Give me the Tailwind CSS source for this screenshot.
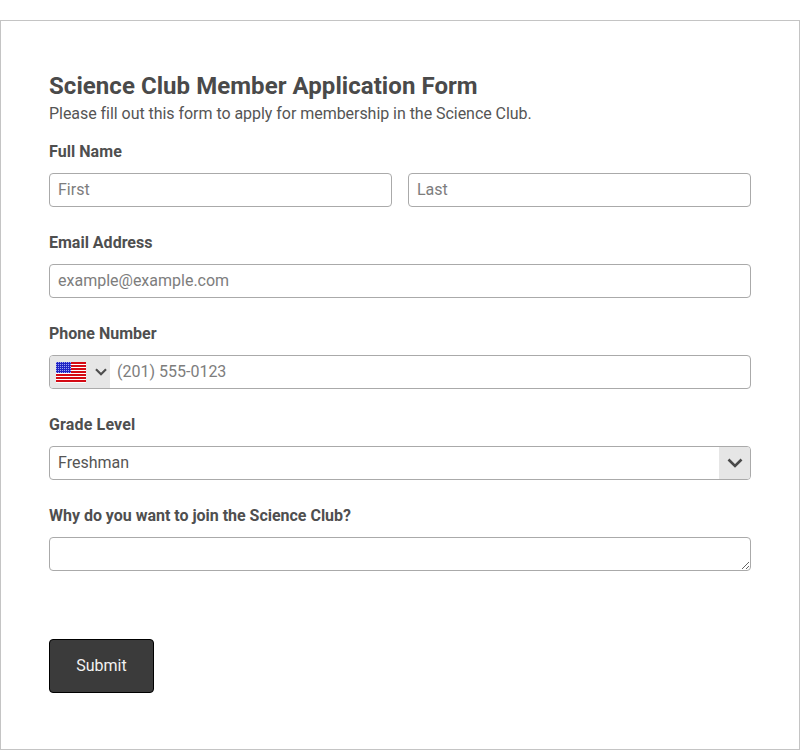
<!DOCTYPE html>
<html lang="en">
<head>
<meta charset="utf-8">
<title>Science Club Member Application Form</title>
<script src="https://cdn.jsdelivr.net/npm/@tailwindcss/browser@4"></script>
</head>
<body class="bg-white font-['Roboto',sans-serif] text-[#4f4f4f]">
<div class="pt-5 h-[750px] overflow-hidden">
<form class="h-[730px] border border-[#c4c4c4] px-12 pt-[49px]">
  <h1 class="text-2xl leading-[32px] font-bold tracking-[0.055px] text-[#4a4a4a]">Science Club Member Application Form</h1>
  <p class="text-base leading-[24px] tracking-[-0.042px] text-[#555555]">Please fill out this form to apply for membership in the Science Club.</p>

  <div class="mt-[15px] h-[91px]">
    <label class="block text-base leading-[22px] font-bold mb-[10px] tracking-[0.05px]">Full Name</label>
    <div class="flex gap-4">
      <input placeholder="First" class="w-full min-w-0 h-[34px] px-2 pb-[2px] text-base border border-[#aaaaaa] rounded-[4px] placeholder:text-[#7d7d7d] outline-none">
      <input placeholder="Last" class="w-full min-w-0 h-[34px] px-2 pb-[2px] text-base border border-[#aaaaaa] rounded-[4px] placeholder:text-[#7d7d7d] outline-none">
    </div>
  </div>

  <div class="h-[91px]">
    <label class="block text-base leading-[22px] font-bold mb-[10px]">Email Address</label>
    <input placeholder="example@example.com" class="block w-full h-[34px] px-2 pb-[2px] text-base border border-[#aaaaaa] rounded-[4px] placeholder:text-[#7d7d7d] outline-none">
  </div>

  <div class="h-[91px]">
    <label class="block text-base leading-[22px] font-bold mb-[10px]">Phone Number</label>
    <div class="flex h-[34px] border border-[#aaaaaa] rounded-[4px] overflow-hidden">
      <div class="flex items-center w-[60px] shrink-0 bg-[#e6e6e6] pl-[6px]">
        <svg width="30" height="21" viewBox="0 0 30 21" class="shrink-0">
          <defs>
            <pattern id="stars" width="2" height="2" patternUnits="userSpaceOnUse">
              <rect width="2" height="2" fill="#2024c4"/>
              <rect width="1" height="1" fill="#9ea2f0"/>
            </pattern>
          </defs>
          <rect width="30" height="21" fill="#fff"/>
          <g fill="#d40a14">
            <rect y="0" width="30" height="2"/><rect y="3" width="30" height="2"/><rect y="6" width="30" height="2"/><rect y="9" width="30" height="2"/><rect y="12" width="30" height="2"/><rect y="15" width="30" height="2"/><rect y="18" width="30" height="2"/>
          </g>
          <rect width="15" height="11" fill="url(#stars)"/>
        </svg>
        <svg width="12" height="8" viewBox="0 0 12 8" class="ml-[9px] shrink-0"><path d="M1 1.2 L6 6.2 L11 1.2" fill="none" stroke="#4f4f4f" stroke-width="2.2"/></svg>
      </div>
      <input placeholder="(201) 555-0123" class="flex-1 min-w-0 px-[7px] text-base placeholder:text-[#7d7d7d] outline-none">
    </div>
  </div>

  <div class="h-[91px]">
    <label class="block text-base leading-[22px] font-bold mb-[10px] tracking-[0.15px]">Grade Level</label>
    <div class="flex items-center h-[34px] border border-[#aaaaaa] rounded-[4px] overflow-hidden">
      <span class="flex-1 pl-2 text-base text-[#555555]">Freshman</span>
      <span class="flex items-center justify-center w-[31px] h-full bg-[#e6e6e6]">
        <svg width="16" height="10" viewBox="0 0 16 10"><path d="M1.5 1.5 L8 8 L14.5 1.5" fill="none" stroke="#4a4a4a" stroke-width="2.6"/></svg>
      </span>
    </div>
  </div>

  <div>
    <label class="block text-base leading-[22px] font-bold mb-[10px] tracking-[-0.02px]">Why do you want to join the Science Club?</label>
    <textarea class="block w-full h-[34px] border border-[#aaaaaa] rounded-[4px] outline-none px-2 text-base"></textarea>
  </div>

  <button type="button" class="block mt-[68px] w-[105px] h-[54px] bg-[#3b3b3b] border border-black rounded-[4px] text-[#f2f2f2] text-base">Submit</button>
</form>
</div>
</body>
</html>
